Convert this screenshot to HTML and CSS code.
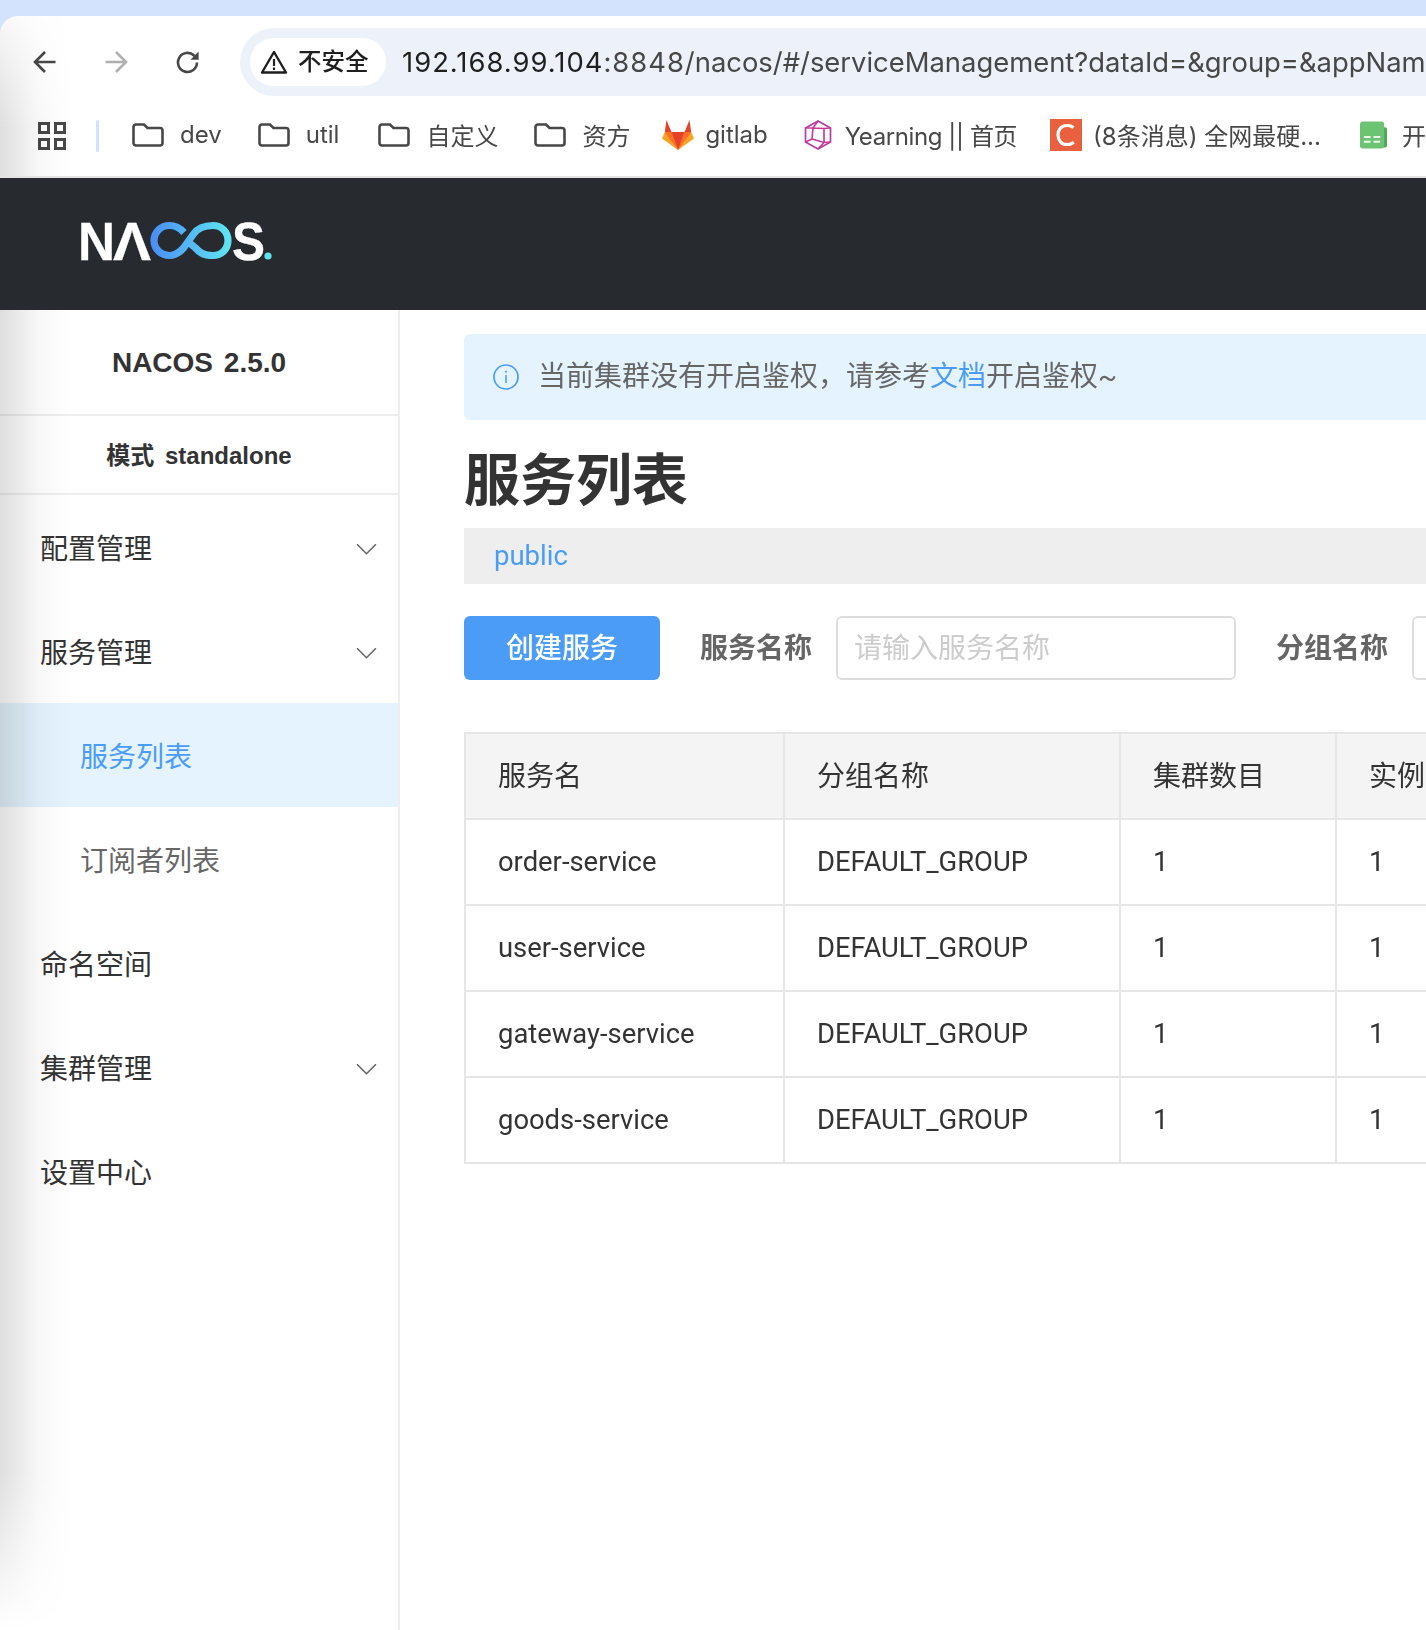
FILE: index.html
```html
<!DOCTYPE html>
<html lang="zh">
<head>
<meta charset="utf-8">
<title>Nacos</title>
<link rel="stylesheet" href="styles.css">
</head>
<body>
<div class="browser">
  <div class="top-band"></div>
  <div class="chrome">
    <div class="nav-row">
      <svg class="nav-icon back" viewBox="0 0 24 24"><path d="M22.5 12H2.5M12 2 2 12l10 10" fill="none" stroke="#474747" stroke-width="2.6"/></svg>
      <svg class="nav-icon forward" viewBox="0 0 24 24"><path d="M1.5 12h20M12 2l10 10-10 10" fill="none" stroke="#b0b0b0" stroke-width="2.6"/></svg>
      <svg class="nav-icon reload" viewBox="0 0 24 24"><path d="M21 12.5a9.5 9.5 0 1 1-3-7l3 2.6" fill="none" stroke="#474747" stroke-width="2.6"/><path d="M22.6 1.5v8.2h-8.2z" fill="#474747"/></svg>
      <div class="omnibox">
        <div class="chip">
          <svg class="warn" viewBox="0 0 28 24"><path d="M14 2 26 22.5H2z" fill="none" stroke="#1f1f1f" stroke-width="2.4" stroke-linejoin="round"/><path d="M14 9v7M14 17.5v2.4" stroke="#1f1f1f" stroke-width="2.2"/></svg>
          <span>不安全</span>
        </div>
        <div class="url"><span class="host">192.168.99.104</span><span class="port">:8848</span>/nacos/#/serviceManagement?dataId=&amp;group=&amp;appName=&amp;namespace=public</div>
      </div>
    </div>
    <div class="bookmarks">
      <svg class="apps" viewBox="0 0 28 28"><g fill="none" stroke="#474747" stroke-width="3"><rect x="1.5" y="1.5" width="9" height="9"/><rect x="17.5" y="1.5" width="9" height="9"/><rect x="1.5" y="17.5" width="9" height="9"/><rect x="17.5" y="17.5" width="9" height="9"/></g></svg>
      <div class="sep"></div>
      <div class="bm bm-dev"><svg class="folder" viewBox="0 0 32 24"><path d="M1.5 4A2.500 2.500 0 0 1 4 1.500h8l3.500 3.500H28A2.500 2.500 0 0 1 30.500 7.500V20A2.500 2.500 0 0 1 28 22.500H4A2.500 2.500 0 0 1 1.500 20z" fill="none" stroke="#474747" stroke-width="2.6"/></svg><span>dev</span></div>
      <div class="bm bm-util"><svg class="folder" viewBox="0 0 32 24"><path d="M1.5 4A2.500 2.500 0 0 1 4 1.500h8l3.500 3.500H28A2.500 2.500 0 0 1 30.500 7.500V20A2.500 2.500 0 0 1 28 22.500H4A2.500 2.500 0 0 1 1.500 20z" fill="none" stroke="#474747" stroke-width="2.6"/></svg><span>util</span></div>
      <div class="bm bm-custom"><svg class="folder" viewBox="0 0 32 24"><path d="M1.5 4A2.500 2.500 0 0 1 4 1.500h8l3.500 3.500H28A2.500 2.500 0 0 1 30.500 7.500V20A2.500 2.500 0 0 1 28 22.500H4A2.500 2.500 0 0 1 1.500 20z" fill="none" stroke="#474747" stroke-width="2.6"/></svg><span>自定义</span></div>
      <div class="bm bm-fund"><svg class="folder" viewBox="0 0 32 24"><path d="M1.5 4A2.500 2.500 0 0 1 4 1.500h8l3.500 3.500H28A2.500 2.500 0 0 1 30.500 7.500V20A2.500 2.500 0 0 1 28 22.500H4A2.500 2.500 0 0 1 1.500 20z" fill="none" stroke="#474747" stroke-width="2.6"/></svg><span>资方</span></div>
      <div class="bm bm-gitlab tight"><svg class="fav" viewBox="0 0 32 30"><path d="M16 30 0 18.500 2.800 12h26.400L32 18.500z" fill="#fca326"/><path d="M16 30 9.500 12H2.800zM16 30l6.500-18h6.700z" fill="#fc6d26"/><path d="M16 30 9.500 12h13z" fill="#e24329"/><path d="M4.500 0 9.500 12H2.800zM27.500 0 22.500 12h6.700z" fill="#e24329"/></svg><span>gitlab</span></div>
      <div class="bm bm-yearning tight"><svg class="fav" viewBox="0 0 28 30"><g fill="none" stroke-width="1.700"><path d="M14 1 26.500 8v14L14 29 1.500 22V8z" stroke="#b53fa8"/><path d="M1.500 8H9L14 1M9 8l11 .500L26.500 8M9 8l-1 11-6.500 3M8 19l12 3.500 6.500-.500M20 8.500v14L14 29" stroke="#c93a9c"/></g></svg><span>Yearning || 首页</span></div>
      <div class="bm bm-csdn tight"><svg class="fav csdn" viewBox="0 0 32 32"><rect width="32" height="32" fill="#e9603e"/><path d="M23.500 8.500A9.500 9.500 0 0 0 17 6.500c-5.500 0-9 4-9 9.500s3.500 9.500 9 9.500c2.700 0 5-.800 6.800-2.300" fill="none" stroke="#fff" stroke-width="3.200"/></svg><span>(8条消息) 全网最硬...</span></div>
      <div class="bm bm-sheet tight"><svg class="fav sheet" viewBox="0 0 28 28"><rect x="18" y="6" width="10" height="21" rx="2" fill="#4fa85a"/><rect width="25" height="28" rx="3" fill="#6cc472"/><path d="M4 16h7M14 16h7M4 21h7M14 21h7" stroke="#e9f7ea" stroke-width="2"/></svg><span>开发环境</span></div>
    </div>
  </div>
  <header class="app-header">
    <svg class="logo" viewBox="0 0 193 40" role="img" aria-label="NACOS">
      <defs><linearGradient id="inf" x1="0" x2="1" y1="0" y2="0"><stop offset="0" stop-color="#4a90f7"/><stop offset="1" stop-color="#5fe3f1"/></linearGradient></defs>
      <text class="logo-text" x="-1" y="38.500" textLength="37" lengthAdjust="spacingAndGlyphs">N</text>
      <text class="logo-text" x="34" y="38.500" textLength="38" lengthAdjust="spacingAndGlyphs">Λ</text>
      <path d="M105 11.500C101 7 97 4.500 90.500 4.500 82 4.500 75 11 75 19.500S82 34.500 90.500 34.500c6.500 0 10-3 14-7.500l10-14C118 8 123 4.500 134 4.500c8.500 0 15 6.500 15 15s-6.500 15-15 15c-10 0-14-3.500-18-8l-9-7.500" fill="none" stroke="url(#inf)" stroke-width="7.200"/>
      <text class="logo-text" x="153" y="38.500" textLength="33" lengthAdjust="spacingAndGlyphs">S</text>
      <circle cx="189" cy="35" r="3.600" fill="#5fe3f1"/>
    </svg>
  </header>
  <div class="app-body">
    <aside class="side">
      <div class="side-title">NACOS 2.5.0</div>
      <div class="side-mode">模式 standalone</div>
      <nav class="menu">
        <div class="menu-item"><span>配置管理</span><svg class="chev" viewBox="0 0 20 12"><path d="M1 1l9 9 9-9" fill="none" stroke="#666" stroke-width="1.500"/></svg></div>
        <div class="menu-item"><span>服务管理</span><svg class="chev" viewBox="0 0 20 12"><path d="M1 1l9 9 9-9" fill="none" stroke="#666" stroke-width="1.500"/></svg></div>
        <div class="menu-item sub active"><span>服务列表</span></div>
        <div class="menu-item sub"><span>订阅者列表</span></div>
        <div class="menu-item"><span>命名空间</span></div>
        <div class="menu-item"><span>集群管理</span><svg class="chev" viewBox="0 0 20 12"><path d="M1 1l9 9 9-9" fill="none" stroke="#666" stroke-width="1.500"/></svg></div>
        <div class="menu-item"><span>设置中心</span></div>
      </nav>
    </aside>
    <main class="content">
      <div class="alert">
        <svg class="info" viewBox="0 0 26 26"><circle cx="13" cy="13" r="12" fill="none" stroke="#4a9cf6" stroke-width="1.700"/><path d="M13 11v8" stroke="#4a9cf6" stroke-width="1.500"/><circle cx="13" cy="7.800" r="1" fill="#4a9cf6"/></svg>
        <span class="alert-text">当前集群没有开启鉴权，请参考<a class="link">文档</a>开启鉴权~</span>
      </div>
      <h1 class="page-title">服务列表</h1>
      <div class="ns-bar"><span>public</span></div>
      <div class="filters">
        <button class="btn">创建服务</button>
        <label class="f-label first">服务名称</label>
        <div class="f-input"><span>请输入服务名称</span></div>
        <label class="f-label">分组名称</label>
        <div class="f-input"><span>请输入分组名称</span></div>
      </div>
      <table class="grid">
        <colgroup><col class="c1"><col class="c2"><col class="c3"><col class="c4"></colgroup>
        <thead><tr><th>服务名</th><th>分组名称</th><th>集群数目</th><th>实例数</th></tr></thead>
        <tbody>
          <tr><td>order-service</td><td>DEFAULT_GROUP</td><td>1</td><td>1</td></tr>
          <tr><td>user-service</td><td>DEFAULT_GROUP</td><td>1</td><td>1</td></tr>
          <tr><td>gateway-service</td><td>DEFAULT_GROUP</td><td>1</td><td>1</td></tr>
          <tr><td>goods-service</td><td>DEFAULT_GROUP</td><td>1</td><td>1</td></tr>
        </tbody>
      </table>
    </main>
  </div>
</div>
</body>
</html>
```
FILE: styles.css
```css
* { box-sizing: border-box; }
html, body { margin: 0; padding: 0; background: #fff; }
body { width: 1426px; height: 1630px; overflow: hidden; }
.browser { width: 1426px; height: 1630px; overflow: hidden; display: flex; flex-direction: column; background: #d3e3fd; }
.top-band { height: 16px; flex: none; background: #d3e3fd; }

.chrome { position: relative; height: 162px; flex: none; background: #fff; border-radius: 18px 0 0 0; border-bottom: 2px solid #e2e2e2; font-family: Inter, "Noto Sans CJK SC", sans-serif; color: #474747; overflow: hidden; }
.chrome::after { content: ""; position: absolute; inset: 0 auto 0 0; width: 70px; background: linear-gradient(to right, rgba(0,0,0,.13), rgba(0,0,0,.03) 55%, rgba(0,0,0,0)); -webkit-mask-image: linear-gradient(to bottom, rgba(0,0,0,.2), #000 70%); mask-image: linear-gradient(to bottom, rgba(0,0,0,.2), #000 70%); mix-blend-mode: multiply; pointer-events: none; }
.nav-row { display: flex; align-items: center; height: 80px; padding: 12px 0 0 33px; }
.nav-icon { width: 24px; height: 24px; flex: none; }
.forward { margin-left: 47px; }
.reload { margin-left: 48px; }
.omnibox { display: flex; align-items: center; height: 68px; margin-left: 40px; padding-left: 10px; width: 1300px; flex: none; background: #edf2fa; border-radius: 34px 0 0 34px; }
.chip { display: flex; align-items: center; height: 48px; width: 136px; flex: none; padding-left: 10px; background: #fff; border-radius: 24px; color: #1f1f1f; font-size: 23.500px; }
.chip span { margin-bottom: 4px; font-weight: 500; }
.warn { width: 28px; height: 24px; margin-right: 10px; flex: none; }
.url { margin-left: 16px; white-space: nowrap; font-size: 27.400px; color: #474747; }
.host { color: #1f1f1f; letter-spacing: 1px; }
.port { letter-spacing: 1px; }

.bookmarks { display: flex; align-items: center; height: 80px; padding: 0 0 2px 38px; white-space: nowrap; font-size: 24px; }
.apps { width: 28px; height: 28px; flex: none; margin-top: 2px; }
.sep { width: 3px; height: 32px; margin: 2px 33px 0 30px; background: #d3e3fd; border-radius: 2px; flex: none; }
.bm { display: flex; align-items: center; flex: none; }
.bm-dev { margin-right: 36px; }
.bm-util { margin-right: 39px; }
.bm-custom { margin-right: 36px; }
.bm-fund { margin-right: 32px; }
.bm-gitlab { margin-right: 36px; }
.bm-yearning { margin-right: 33px; letter-spacing: -.4px; }
.bm-csdn { margin-right: 39px; }
.bm span { margin: 0 0 1px 16px; }
.tight span { margin-left: 11px; }
.bm-sheet span { margin-left: 15px; }
.folder { width: 32px; height: 24px; flex: none; }
.fav { width: 32px; height: 30px; flex: none; }
.csdn { height: 32px; }
.sheet { width: 27px; height: 28px; }
.bm-yearning .fav { width: 28px; margin-right: 2px; }

.app-header { height: 132px; flex: none; background: #272b30; display: flex; align-items: center; padding-left: 79px; }
.logo { width: 193px; height: 40px; display: block; margin-top: -6px; flex: none; }
.logo-text { font-family: "Liberation Sans", sans-serif; font-weight: 700; font-size: 53px; fill: #fff; stroke: #fff; stroke-width: .3px; }

.app-body { flex: 1; display: flex; background: #fff; min-height: 0; font-family: Roboto, "Noto Sans CJK SC", sans-serif; }
.side { position: relative; width: 400px; flex: none; border-right: 2px solid #eee; background: #fff; }
.side::after { content: ""; position: absolute; inset: 0 auto 0 0; width: 70px; background: linear-gradient(to right, rgba(0,0,0,.13), rgba(0,0,0,.03) 55%, rgba(0,0,0,0)); -webkit-mask-image: linear-gradient(to bottom, #000 88%, transparent 100%); mask-image: linear-gradient(to bottom, #000 88%, transparent 100%); mix-blend-mode: multiply; pointer-events: none; }
.side-title { height: 106px; padding-top: 2px; display: flex; align-items: center; justify-content: center; border-bottom: 2px solid #eee; font-family: "Liberation Sans", "Noto Sans CJK SC", sans-serif; font-weight: 700; font-size: 28px; word-spacing: 3px; color: #333; }
.side-mode { height: 79px; padding-bottom: 2px; display: flex; align-items: center; justify-content: center; border-bottom: 2px solid #eee; font-family: "Liberation Sans", "Noto Sans CJK SC", sans-serif; font-weight: 700; font-size: 24px; word-spacing: 4px; color: #333; }
.menu-item { height: 104px; display: flex; align-items: center; justify-content: space-between; padding: 0 21px 0 40px; font-size: 28px; color: #333; }
.menu-item.sub { padding-left: 80px; color: #666; }
.menu-item.active { background: #e4f3fe; color: #4a9cf6; }
.chev { width: 21px; height: 13px; flex: none; margin-top: 4px; }

.content { flex: 1; min-width: 0; padding: 24px 0 0 64px; overflow: hidden; color: #333; }
.alert { width: 1200px; height: 86px; display: flex; align-items: center; padding-left: 29px; background: #e4f3fe; border-radius: 6px; font-size: 28px; color: #666; }
.info { width: 26px; height: 26px; margin: 0 19px 0 0; flex: none; }
.alert-text { margin-bottom: 6px; }
.link { color: #4a9cf6; }
.page-title { margin: 0; height: 108px; width: 1200px; font-size: 56px; line-height: 122px; font-weight: 700; color: #333; }
.ns-bar { width: 1200px; height: 56px; display: flex; align-items: center; padding: 0 0 2px 30px; background: #eee; font-size: 27.500px; color: #4a9cf6; }
.filters { display: flex; align-items: center; width: 1300px; height: 64px; margin-top: 32px; font-size: 28px; }
.btn { width: 196px; height: 64px; flex: none; border: 0; padding: 0 0 4px; border-radius: 6px; background: #4a9cf6; color: #fff; font: inherit; font-weight: 500; }
.f-label { flex: none; margin: 0 24px 4px 40px; font-weight: 700; color: #666; }
.f-input { width: 400px; height: 64px; flex: none; display: flex; align-items: center; padding: 0 0 4px 16px; border: 2px solid #ddd; border-radius: 6px; background: #fff; color: #ccc; }

.grid { margin-top: 52px; border-collapse: collapse; table-layout: fixed; width: 1171px; font-size: 28px; color: #333; border: 2px solid #e6e6e6; border-right: 0; }
.c1 { width: 319px; }
.c2 { width: 336px; }
.c3 { width: 216px; }
.c4 { width: 300px; }
.grid th, .grid td { height: 86px; padding: 0 32px; text-align: left; font-weight: 400; border: 2px solid #e6e6e6; }
.grid th { background: #f4f4f4; padding-bottom: 4px; }
.grid td { font-size: 27.400px; padding-bottom: 0; }
```
